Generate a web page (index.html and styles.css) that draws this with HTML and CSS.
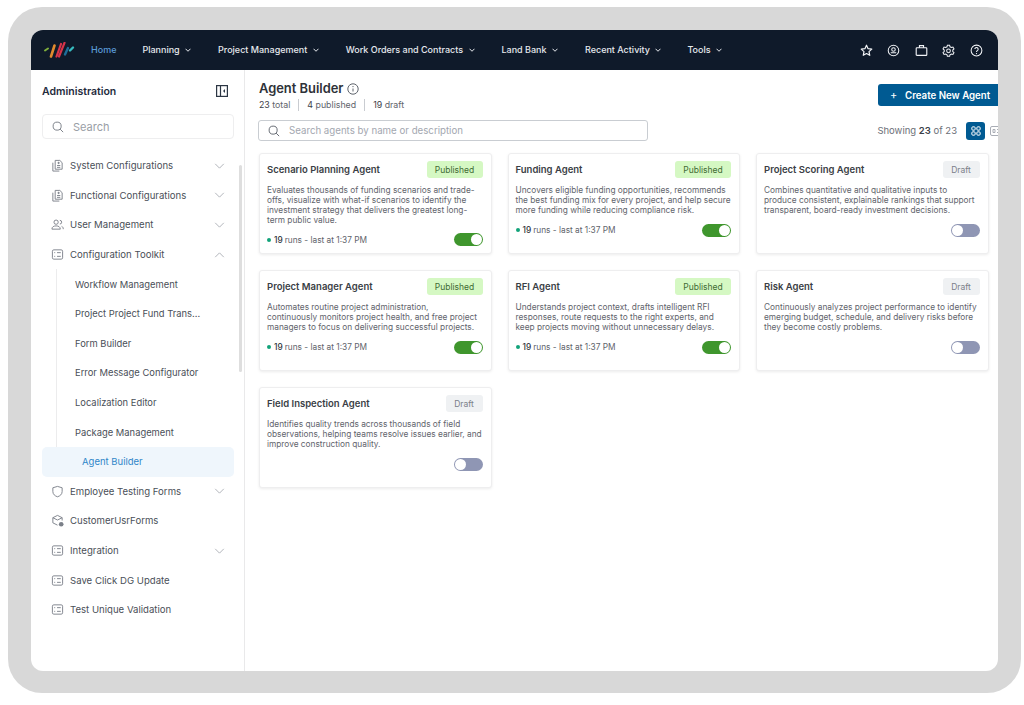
FILE: index.html
```html
<!DOCTYPE html>
<html lang="en">
  <head>
    <meta charset="UTF-8" />
    <title>Agent Builder</title>
    <link rel="stylesheet" href="styles.css">
  </head>
  <body>
    <svg class="icon-defs" width="0" height="0">
      <symbol id="i-chev" viewBox="0 0 12 7"><path d="M1 1l5 5 5-5" fill="none" stroke="currentColor"/></symbol>
      <symbol id="i-docs" viewBox="0 0 14 14"><g fill="none" stroke="currentColor" stroke-width="1"><path d="M4.500 1.500h5l2.500 2.500v7H4.500z"/><path d="M2 4v9h7"/><path d="M6.500 7h3.500M6.500 9h3.500M8.200 3v2.500M7 4.200h2.400"/></g></symbol>
      <symbol id="i-users" viewBox="0 0 14 14"><g fill="none" stroke="currentColor" stroke-width="1"><circle cx="5.500" cy="4.500" r="2.300"/><path d="M1 12c0-2.500 2-3.500 4.500-3.500S10 9.500 10 12z"/><path d="M9.500 2.500a2 2 0 0 1 0 4M11.500 9c1 .4 1.700 1.200 1.700 3"/></g></symbol>
      <symbol id="i-list" viewBox="0 0 14 14"><g fill="none" stroke="currentColor" stroke-width="1"><rect x="1.500" y="2" width="11" height="10" rx="1.500"/><path d="M6.500 5H10.500M6.500 9H10.500M3.500 5h1M3.500 9h1"/></g></symbol>
      <symbol id="i-shield" viewBox="0 0 14 14"><path d="M7 1.500l5 1.500v4c0 3-2.200 4.800-5 5.700-2.800-.9-5-2.700-5-5.700V3z" fill="none" stroke="currentColor"/></symbol>
      <symbol id="i-box" viewBox="0 0 14 14"><g fill="none" stroke="currentColor"><path d="M7 1.500l5 2.500v3M7 1.500L2 4v5.500l5 2.500M2 4l5 2.500L12 4"/></g><circle cx="11" cy="11" r="2.500" fill="currentColor"/></symbol>
      <symbol id="i-search" viewBox="0 0 14 14"><g fill="none" stroke="currentColor" stroke-width="1.100"><circle cx="6" cy="6" r="4.700"/><path d="M9.500 9.500L13 13"/></g></symbol>
      <symbol id="i-grid" viewBox="0 0 12 12"><g fill="none" stroke="currentColor" stroke-width="1.200"><rect x="1" y="1" width="4" height="4" rx="1.200"/><rect x="7" y="1" width="4" height="4" rx="1.200"/><rect x="1" y="7" width="4" height="4" rx="1.200"/><rect x="7" y="7" width="4" height="4" rx="1.200"/></g></symbol>
    </svg>

    <div class="frame">
      <div class="screen">
        <header class="topbar">
          <svg class="logo" viewBox="0 0 32 16" width="32" height="16">
            <path d="M2 8.500L5 6.500" stroke="#7fae3c" stroke-width="2" stroke-linecap="round"/>
            <path d="M8 14.500L11.500 3.500" stroke="#e08a2e" stroke-width="2.600" stroke-linecap="round"/>
            <path d="M13.500 14.500L18 2M16 14.500L21.500 .8" stroke="#d8344a" stroke-width="2.200" stroke-linecap="round"/>
            <path d="M22 12.500L25 6" stroke="#1f6e9a" stroke-width="2.400" stroke-linecap="round"/>
            <path d="M27 8.500L30 5.500" stroke="#37bcc0" stroke-width="2.400" stroke-linecap="round"/>
          </svg>
          <nav class="nav">
            <a class="nav-home">Home</a>
            <a class="nav-planning">Planning <svg class="nav-chev"><use href="#i-chev"/></svg></a>
            <a class="nav-pm">Project Management <svg class="nav-chev"><use href="#i-chev"/></svg></a>
            <a class="nav-wo">Work Orders and Contracts <svg class="nav-chev"><use href="#i-chev"/></svg></a>
            <a class="nav-land">Land Bank <svg class="nav-chev"><use href="#i-chev"/></svg></a>
            <a class="nav-recent">Recent Activity <svg class="nav-chev"><use href="#i-chev"/></svg></a>
            <a>Tools <svg class="nav-chev"><use href="#i-chev"/></svg></a>
          </nav>
          <div class="top-icons">
            <svg viewBox="0 0 14 14"><path d="M7 1.300l1.700 3.700 4 .5-3 2.700.8 4L7 10.300l-3.500 1.900.8-4-3-2.700 4-.5z" fill="none" stroke="currentColor" stroke-width="1.300" stroke-linejoin="round"/></svg>
            <svg viewBox="0 0 14 14"><g fill="none" stroke="currentColor" stroke-width="1.100"><circle cx="7" cy="7" r="5.700"/><circle cx="7" cy="6" r="1.900"/><path d="M4 9.500h6"/></g></svg>
            <svg viewBox="0 0 14 14"><g fill="none" stroke="currentColor" stroke-width="1.200"><rect x="1.300" y="4" width="11.400" height="8.300" rx=".8"/><path d="M4.800 4V1.800h4.400V4"/></g></svg>
            <svg viewBox="0 0 14 14"><g fill="none" stroke="currentColor" stroke-width="1.100"><path d="M5.800 1.300h2.400l.4 1.700 1.500.8 1.700-.5 1.100 2-1.300 1.200v1.600l1.300 1.200-1.100 2-1.700-.5-1.500.8-.4 1.700H5.800l-.4-1.700-1.500-.8-1.700.5-1.100-2 1.300-1.200V6.500L1.100 5.300l1.100-2 1.700.5 1.500-.8z"/><circle cx="7" cy="7.300" r="2"/></g></svg>
            <svg viewBox="0 0 14 14"><g fill="none" stroke="currentColor" stroke-width="1.100"><circle cx="7" cy="7" r="5.800"/><path d="M5.200 5.500a1.800 1.800 0 1 1 2.700 1.600c-.6.400-.9.700-.9 1.400"/></g><circle cx="7" cy="10.300" r=".7" fill="currentColor"/></svg>
          </div>
        </header>

        <div class="body-row">
          <aside class="sidebar">
            <div class="side-head">
              <span class="side-title">Administration</span>
              <svg class="side-toggle" viewBox="0 0 12 12"><g fill="none" stroke="currentColor" stroke-width="1.200"><rect x=".6" y=".6" width="10.800" height="10.800"/><path d="M4.500 1v10"/></g><path d="M9 4L7 6l2 2z" fill="currentColor"/></svg>
            </div>
            <div class="side-search">
              <svg class="side-search-icon"><use href="#i-search"/></svg>
              <span>Search</span>
            </div>
            <div class="menu">
              <div class="menu-row"><svg class="menu-icon"><use href="#i-docs"/></svg><span class="menu-label">System Configurations</span><svg class="menu-chev"><use href="#i-chev"/></svg></div>
              <div class="menu-row"><svg class="menu-icon"><use href="#i-docs"/></svg><span class="menu-label">Functional Configurations</span><svg class="menu-chev"><use href="#i-chev"/></svg></div>
              <div class="menu-row"><svg class="menu-icon"><use href="#i-users"/></svg><span class="menu-label">User Management</span><svg class="menu-chev"><use href="#i-chev"/></svg></div>
              <div class="menu-row"><svg class="menu-icon"><use href="#i-list"/></svg><span class="menu-label">Configuration Toolkit</span><svg class="menu-chev chev-up"><use href="#i-chev"/></svg></div>
              <div class="submenu">
                <div class="sub-row">Workflow Management</div>
                <div class="sub-row">Project Project Fund Trans...</div>
                <div class="sub-row">Form Builder</div>
                <div class="sub-row">Error Message Configurator</div>
                <div class="sub-row">Localization Editor</div>
                <div class="sub-row">Package Management</div>
              </div>
              <div class="sub-active">Agent Builder</div>
              <div class="menu-row"><svg class="menu-icon"><use href="#i-shield"/></svg><span class="menu-label">Employee Testing Forms</span><svg class="menu-chev"><use href="#i-chev"/></svg></div>
              <div class="menu-row"><svg class="menu-icon"><use href="#i-box"/></svg><span class="menu-label">CustomerUsrForms</span></div>
              <div class="menu-row"><svg class="menu-icon"><use href="#i-list"/></svg><span class="menu-label">Integration</span><svg class="menu-chev"><use href="#i-chev"/></svg></div>
              <div class="menu-row"><svg class="menu-icon"><use href="#i-list"/></svg><span class="menu-label">Save Click DG Update</span></div>
              <div class="menu-row"><svg class="menu-icon"><use href="#i-list"/></svg><span class="menu-label">Test Unique Validation</span></div>
            </div>
            <div class="side-scroll"></div>
          </aside>

          <main class="main">
            <div class="main-inner">
              <div class="page-head">
                <div>
                  <h1 class="page-title">Agent Builder
                    <svg class="info-icon" viewBox="0 0 12 12"><g fill="none" stroke="currentColor"><circle cx="6" cy="6" r="5.200"/><path d="M6 5.500v3"/></g><circle cx="6" cy="3.600" r=".7" fill="currentColor"/></svg></h1>
                  <div class="stats">
                    <span><b>23</b> total</span>
                    <span class="stat-sep"><b>4</b> published</span>
                    <span class="stat-sep"><b>19</b> draft</span>
                  </div>
                </div>
                <button class="create-btn"><span class="plus">+</span>Create New Agent</button>
              </div>

              <div class="toolbar">
                <div class="agent-search">
                  <svg class="agent-search-icon"><use href="#i-search"/></svg>
                  <span>Search agents by name or description</span>
                </div>
                <div class="toolbar-right">
                  <span class="showing">Showing <b>23</b> of 23</span>
                  <span class="view-btn"><svg class="view-grid"><use href="#i-grid"/></svg></span>
                  <svg class="view-list" viewBox="0 0 14 10"><g fill="none" stroke="currentColor"><rect x=".5" y=".5" width="13" height="9" rx="1.500"/><path d="M3 3.500h2v3H3zM7 3.500h5M7 6.500h5"/></g></svg>
                </div>
              </div>

              <div class="cards">
                <article class="card">
                  <div class="card-head"><h2>Scenario Planning Agent</h2><span class="badge badge-pub">Published</span></div>
                  <p>Evaluates thousands of funding scenarios and trade-<br>offs, visualize with what-if scenarios to identify the<br>investment strategy that delivers the greatest long-<br>term public value.</p>
                  <div class="card-foot"><span class="runs"><i class="dot"></i><b>19</b> runs - last at 1:37 PM</span><span class="toggle on"></span></div>
                </article>
                <article class="card">
                  <div class="card-head"><h2>Funding Agent</h2><span class="badge badge-pub">Published</span></div>
                  <p>Uncovers eligible funding opportunities, recommends<br>the best funding mix for every project, and help secure<br>more funding while reducing compliance risk.</p>
                  <div class="card-foot"><span class="runs"><i class="dot"></i><b>19</b> runs - last at 1:37 PM</span><span class="toggle on"></span></div>
                </article>
                <article class="card">
                  <div class="card-head"><h2>Project Scoring Agent</h2><span class="badge badge-draft">Draft</span></div>
                  <p>Combines quantitative and qualitative inputs to<br>produce consistent, explainable rankings that support<br>transparent, board-ready investment decisions.</p>
                  <div class="card-foot"><span class="toggle"></span></div>
                </article>
                <article class="card">
                  <div class="card-head"><h2>Project Manager Agent</h2><span class="badge badge-pub">Published</span></div>
                  <p>Automates routine project administration,<br>continuously monitors project health, and free project<br>managers to focus on delivering successful projects.</p>
                  <div class="card-foot"><span class="runs"><i class="dot"></i><b>19</b> runs - last at 1:37 PM</span><span class="toggle on"></span></div>
                </article>
                <article class="card">
                  <div class="card-head"><h2>RFI Agent</h2><span class="badge badge-pub">Published</span></div>
                  <p>Understands project context, drafts intelligent RFI<br>responses, route requests to the right experts, and<br>keep projects moving without unnecessary delays.</p>
                  <div class="card-foot"><span class="runs"><i class="dot"></i><b>19</b> runs - last at 1:37 PM</span><span class="toggle on"></span></div>
                </article>
                <article class="card">
                  <div class="card-head"><h2>Risk Agent</h2><span class="badge badge-draft">Draft</span></div>
                  <p>Continuously analyzes project performance to identify<br>emerging budget, schedule, and delivery risks before<br>they become costly problems.</p>
                  <div class="card-foot"><span class="toggle"></span></div>
                </article>
                <article class="card">
                  <div class="card-head"><h2>Field Inspection Agent</h2><span class="badge badge-draft">Draft</span></div>
                  <p>Identifies quality trends across thousands of field<br>observations, helping teams resolve issues earlier, and<br>improve construction quality.</p>
                  <div class="card-foot"><span class="toggle"></span></div>
                </article>
              </div>
            </div>
          </main>
        </div>
      </div>
    </div>
  </body>
</html>
```

FILE: styles.css
```css
* {
  box-sizing: border-box;
}
html,
body {
  margin: 0;
  background-color: white;
}
body {
  font-family: Inter, "Liberation Sans", sans-serif;
  padding: 7px 3px 12px 8px;
  color: #333;
}
.icon-defs {
  position: absolute;
}
.frame {
  width: 1013px;
  height: 686px;
  padding: 23px;
  background-color: #d8d8d8;
  border-radius: 34px;
}
.screen {
  width: 967px;
  height: 641px;
  display: flex;
  flex-direction: column;
  overflow: hidden;
  background-color: white;
  border-radius: 12px;
}

/* top bar */
.topbar {
  height: 40px;
  flex: none;
  display: flex;
  align-items: center;
  padding-left: 12px;
  background-color: #0f1a2a;
  color: #e6e9ee;
}
.logo {
  flex: none;
  margin-right: 16px;
}
.nav {
  display: flex;
  align-items: center;
  flex: 1;
  padding-bottom: 2px;
  font-size: 9px;
  font-weight: 500;
}
.nav a {
  white-space: nowrap;
}
.nav-chev {
  width: 6px;
  height: 4px;
  margin-left: 3px;
  vertical-align: 1px;
  stroke-width: 2;
}
.nav-home {
  color: #5b9bd8;
  margin-right: 26px;
}
.nav-planning {
  margin-right: 27px;
}
.nav-pm {
  margin-right: 27px;
}
.nav-wo {
  margin-right: 27px;
}
.nav-land {
  margin-right: 27px;
}
.nav-recent {
  margin-right: 26px;
}
.top-icons {
  display: flex;
  align-items: center;
  gap: 14.500px;
  padding-right: 15.500px;
  color: #f2f4f7;
}
.top-icons svg {
  width: 13px;
  height: 13px;
}

.body-row {
  flex: 1;
  display: flex;
  min-height: 0;
}

/* sidebar */
.sidebar {
  position: relative;
  width: 214px;
  flex: none;
  padding: 0 11px;
  border-right: 1px solid #e9e9ea;
}
.side-head {
  height: 42px;
  display: flex;
  align-items: center;
  justify-content: space-between;
  padding-right: 5px;
}
.side-title {
  font-size: 10.500px;
  font-weight: 600;
  color: #1f2b3d;
}
.side-toggle {
  width: 12px;
  height: 12px;
  color: #2c3644;
}
.side-search {
  height: 25px;
  margin: 2px 0 12px;
  display: flex;
  align-items: center;
  gap: 9px;
  padding-left: 9px;
  width: 192px;
  border: 1px solid #eeeeef;
  border-radius: 4px;
  font-size: 11px;
  color: #9a9ea6;
}
.side-search-icon {
  width: 12px;
  height: 12px;
  color: #777c85;
}
.menu-row {
  height: 29.600px;
  width: 192px;
  display: flex;
  align-items: center;
  padding: 0 9px;
  font-size: 9.600px;
  color: #4a4f58;
}
.menu-icon {
  width: 13px;
  height: 13px;
  margin-right: 6px;
  color: #7b8089;
}
.menu-label {
  flex: 1;
}
.menu-chev {
  width: 11px;
  height: 6px;
  color: #a5a9b0;
}
.chev-up {
  transform: rotate(180deg);
}
.submenu {
  margin-left: 14px;
  padding-left: 18px;
  border-left: 1px solid #ececed;
}
.sub-row {
  height: 29.600px;
  display: flex;
  align-items: center;
  font-size: 9.400px;
  color: #4a4f58;
}
.sub-active {
  width: 192px;
  height: 29.600px;
  display: flex;
  align-items: center;
  padding-left: 40px;
  background-color: #eff6fc;
  border-radius: 5px;
  font-size: 9.500px;
  color: #2f86c9;
}
.side-scroll {
  position: absolute;
  left: 208px;
  top: 95px;
  width: 3px;
  height: 207px;
  background-color: #dedede;
  border-radius: 2px;
}

/* main area */
.main {
  flex: 1;
  min-width: 0;
  overflow: hidden;
}
.main-inner {
  width: 760px;
  padding-left: 14px;
}
.page-head {
  display: flex;
  justify-content: space-between;
  align-items: flex-start;
  padding-top: 11px;
  height: 50px;
}
.page-title {
  display: flex;
  align-items: center;
  gap: 4px;
  margin: 0;
  font-size: 12.900px;
  line-height: 15px;
  font-weight: 600;
  color: #2e3238;
}
.info-icon {
  width: 12px;
  height: 12px;
  color: #5f646c;
}
.stats {
  display: flex;
  margin-top: 3px;
  font-size: 8.800px;
  line-height: 12px;
  color: #5f646c;
}
.stats b {
  font-weight: 400;
  color: #3b4048;
}
.stat-sep {
  margin-left: 8px;
  padding-left: 8px;
  border-left: 1px solid #c9ccd1;
}
.create-btn {
  height: 22px;
  width: 134px;
  margin: 3px -7px 0 0;
  flex: none;
  display: flex;
  align-items: center;
  gap: 8px;
  padding: 0 0 0 12px;
  border: none;
  border-radius: 3px;
  background-color: #005a92;
  color: white;
  font-family: inherit;
  font-size: 9.700px;
  font-weight: 600;
}
.plus {
  width: 7px;
  font-size: 11px;
  font-weight: 400;
}
.toolbar {
  height: 33px;
  display: flex;
  align-items: flex-start;
  justify-content: space-between;
  margin-left: -1px;
}
.agent-search {
  width: 390px;
  height: 21px;
  display: flex;
  align-items: center;
  gap: 9px;
  padding-left: 9px;
  border: 1px solid #c9cdd2;
  border-radius: 3px;
  font-size: 9.700px;
  color: #a3a7b0;
}
.agent-search-icon {
  width: 12px;
  height: 12px;
  color: #5f646c;
}
.toolbar-right {
  display: flex;
  align-items: center;
  height: 19px;
  margin-top: 1px;
}
.showing {
  font-size: 9.500px;
  color: #6c7078;
  margin-right: 9px;
}
.showing b {
  font-weight: 600;
  color: #3b4048;
}
.view-btn {
  width: 19px;
  height: 18px;
  display: flex;
  align-items: center;
  justify-content: center;
  background-color: #005a92;
  border-radius: 3px;
  color: white;
}
.view-grid {
  width: 10px;
  height: 10px;
}
.view-list {
  width: 14px;
  height: 10px;
  margin: 0 1px 0 5px;
  color: #a9adb5;
}

/* agent cards */
.cards {
  display: grid;
  grid-template-columns: repeat(3, 232.500px);
  grid-auto-rows: 101px;
  gap: 16px;
}
.card {
  display: flex;
  flex-direction: column;
  padding: 7px 8px 8px 7px;
  background-color: white;
  border: 1px solid #eeeeef;
  border-radius: 3px;
  box-shadow: 0 1px 3px rgba(0, 0, 0, 0.08);
}
.card-head {
  display: flex;
  align-items: center;
  justify-content: space-between;
  height: 17px;
  margin-bottom: 7px;
}
.card h2 {
  margin: 0;
  font-size: 9.500px;
  font-weight: 600;
  color: #3a3e45;
}
.badge {
  height: 17px;
  display: flex;
  align-items: center;
  justify-content: center;
  border-radius: 3px;
  font-size: 8.500px;
}
.badge-pub {
  width: 56px;
  background-color: #d5f8c3;
  color: #3f6b34;
}
.badge-draft {
  width: 37px;
  background-color: #eff1f3;
  color: #7b8089;
}
.card p {
  margin: 0;
  font-size: 8.300px;
  line-height: 10.100px;
  white-space: nowrap;
  color: #5f646c;
}
.card-foot {
  margin-top: 8px;
  display: flex;
  align-items: center;
  justify-content: flex-end;
  height: 14px;
}
.runs {
  flex: 1;
  display: flex;
  align-items: center;
  gap: 3px;
  font-size: 8.300px;
  color: #5f646c;
}
.runs b {
  font-weight: 500;
  color: #2e3238;
  margin-right: -1px;
}
.dot {
  width: 4px;
  height: 4px;
  border-radius: 50%;
  background-color: #12a37a;
}
.toggle {
  position: relative;
  width: 29px;
  height: 13px;
  border-radius: 7px;
  background-color: #8f96b4;
}
.toggle::after {
  content: "";
  position: absolute;
  left: 1px;
  top: 1px;
  width: 11px;
  height: 11px;
  border-radius: 50%;
  background-color: white;
}
.toggle.on {
  background-color: #3f962d;
}
.toggle.on::after {
  left: 17px;
}
```
